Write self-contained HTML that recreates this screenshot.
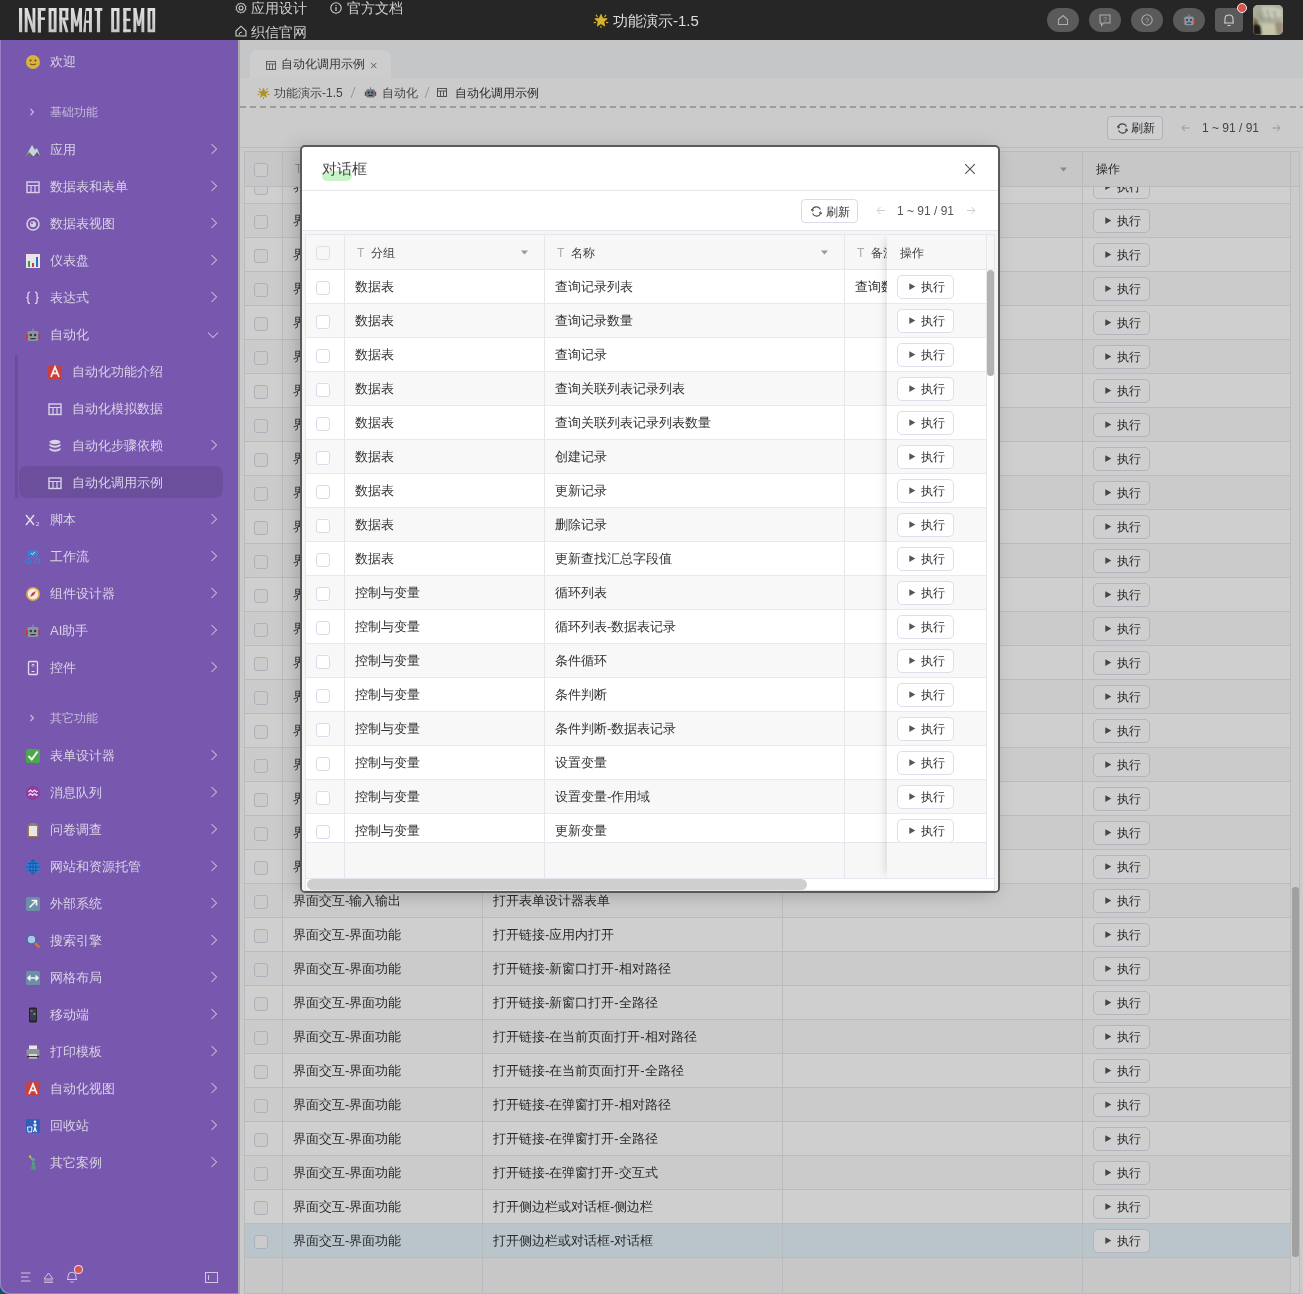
<!DOCTYPE html>
<html><head><meta charset="utf-8"><style>
*{box-sizing:border-box}
html,body{margin:0;padding:0}
body{-webkit-font-smoothing:antialiased;width:1303px;height:1294px;overflow:hidden;position:relative;font-family:"Liberation Sans",sans-serif;background:#262626}
.abs{position:absolute}
.ic{position:absolute;display:block}
#hdr{will-change:transform;position:absolute;left:0;top:0;width:1303px;height:40px;background:#262626}
.hn{position:absolute;font-size:14px;color:#cfcfcf;line-height:16px;white-space:nowrap}
.pill{position:absolute;top:8px;width:32px;height:24px;border-radius:12px;background:#5a5a5a}
#side{will-change:transform;position:absolute;left:0;top:40px;width:238px;height:1254px;background:#7858ae;overflow:hidden;box-shadow:inset 1px -1px 0 #9880c4;border-bottom-left-radius:9px}
#side .ic{}
.sbt{position:absolute;font-size:13px;line-height:20px;color:#d9d3e5;white-space:nowrap}
.sbg{position:absolute;font-size:12px;line-height:16px;color:#c6bbdc;white-space:nowrap}
.sel{position:absolute;background:#6b4f9d;border-radius:8px}
#main{z-index:0;isolation:isolate;will-change:transform;position:absolute;left:238px;top:40px;width:1065px;height:1254px;background:#fafafa;border-left:2px solid #d2d2d6;overflow:hidden}
.tab{position:absolute;left:10px;top:10px;width:141px;height:28px;background:#fdfdfd;border-radius:7px 7px 0 0}
.crumb{position:absolute;left:0;top:38px;width:1065px;height:30px;background:#fbfbfb}
.dash{position:absolute;left:0;top:66px;width:1065px;height:2px;background:repeating-linear-gradient(90deg,#c0c0c4 0 6px,transparent 6px 10px)}
.ctxt{position:absolute;font-size:12px;line-height:14px;color:#555;white-space:nowrap}
.btn{position:absolute;height:23px;border:1px solid #d9dbe6;border-radius:4px;background:#fff;font-size:13px;color:#333;line-height:21px;white-space:nowrap}
.pg{position:absolute;font-size:12px;color:#555;line-height:14px;white-space:nowrap}
#btab{position:absolute;left:4px;top:111px;width:1056px;height:1143px;border:1px solid #e6e7ec;background:#fff;overflow:hidden}
.bhead{position:absolute;left:0;top:0;width:1055px;height:35px;background:#f5f5f7;border-bottom:1px solid #e6e7ec;z-index:2}
.bbody{position:absolute;left:0;top:35px;width:1046px;height:1108px;overflow:hidden;background:#f5f5f7}
.brow{position:absolute;left:0;width:1046px;height:34px;border-bottom:1px solid #e6e7ec;background:#fff}
.brow.odd{background:#fafafa}
.brow.sel2{background:#e5f2fa}
.vl{position:absolute;top:0;width:1px;background:#e6e7ec}
.btxt{position:absolute;top:9px;font-size:13px;line-height:16px;color:#333;white-space:nowrap}
.cb{position:absolute;width:14px;height:14px;border:1px solid #d9dbe8;border-radius:3px;background:#fff}
.cbh{position:absolute;width:14px;height:14px;border:1px solid #dcdeea;border-radius:3px;background:#f7f7f8}
.cbb{position:absolute;width:14px;height:14px;border:1px solid #d6d8e6;border-radius:3px;background:#fafafa}
.eb,.ebb{position:absolute;width:56.5px;height:23.5px;border:1px solid #dcdfea;border-radius:5px;background:#fff;font-size:12px;color:#333}
.eb span,.ebb span{position:absolute;left:23px;top:3.5px;line-height:14px}
#mask{z-index:4;position:absolute;left:238px;top:40px;width:1065px;height:1254px;background:rgba(0,0,0,0.19)}
#dlg{z-index:5;will-change:transform;position:absolute;left:300px;top:145px;width:700px;height:748px;background:#fff;border:2px solid #5a5a5a;border-radius:5px;box-shadow:-8px 0 18px rgba(0,0,0,0.12),0 6px 16px rgba(0,0,0,0.08);overflow:hidden}
.dtxt{position:absolute;top:9px;font-size:13px;line-height:16px;color:#333;white-space:nowrap}
.drow{position:absolute;left:0;width:689px;height:34px;border-bottom:1px solid #e8e9ee;background:#fff}
.drow.odd{background:#f8f8f9}
</style></head><body>
<div id="hdr">
 <svg class="abs" style="left:0;top:0" width="170" height="40" viewBox="0 0 170 40"><defs><linearGradient id="lgx" x1="0" y1="0" x2="0" y2="1"><stop offset="0" stop-color="#e2e2e2"/><stop offset="1" stop-color="#c4c4c4"/></linearGradient></defs><g fill="url(#lgx)" fill-rule="evenodd"><rect x="19.00" y="8.00" width="3.20" height="24.20"/><rect x="24.70" y="8.00" width="2.90" height="24.20"/><rect x="32.50" y="8.00" width="2.90" height="24.20"/><path d="M24.7 8.0 H27.599999999999998 L35.4 32.2 H32.5Z"/><rect x="37.80" y="8.00" width="3.20" height="24.60"/><rect x="37.80" y="8.00" width="7.80" height="2.90"/><rect x="37.80" y="17.40" width="7.20" height="2.60"/><path d="M48.6 8.0 H56.6 V32.2 H48.6Z M51.50 10.90 V29.30 H53.70 V10.90Z"/><rect x="59.30" y="8.00" width="2.90" height="24.20"/><rect x="59.30" y="8.00" width="9.00" height="2.90"/><rect x="65.40" y="8.00" width="2.90" height="12.00"/><rect x="59.30" y="17.60" width="9.00" height="2.70"/><path d="M62.20 20.3 H65.10 L68.5 32.2 H65.60Z"/><rect x="70.90" y="8.00" width="2.90" height="24.20"/><rect x="79.10" y="8.00" width="2.90" height="24.20"/><path d="M70.9 8.0 H73.80 L76.45 21.5 L79.10 8.0 H82 L77.6 26.5 H75.3Z"/><path d="M83.2 32.2 L85.6 8.0 H91.9 V32.2 H89.00 V23.1 H86.00 L85.90 32.2Z M86.30 10.90 H89.00 V20.6 H85.90Z"/><rect x="94.50" y="8.00" width="7.80" height="2.90"/><rect x="96.90" y="8.00" width="3.20" height="24.20"/><path d="M111.2 8.0 H119.5 V32.2 H111.2Z M114.10 10.90 V29.30 H116.60 V10.90Z"/><rect x="123.30" y="8.00" width="3.20" height="24.20"/><rect x="123.30" y="8.00" width="7.50" height="2.90"/><rect x="123.30" y="18.70" width="7.00" height="2.40"/><rect x="123.30" y="29.30" width="7.50" height="2.90"/><rect x="133.40" y="8.00" width="2.90" height="24.20"/><rect x="141.40" y="8.00" width="2.90" height="24.20"/><path d="M133.4 8.0 H136.30 L138.85 21.5 L141.40 8.0 H144.3 L140 26 H137.7Z"/><path d="M147.5 8.0 H155.2 V32.2 H147.5Z M150.40 10.90 V29.30 H152.30 V10.90Z"/></g></svg>
 <svg class="ic" style="left:235px;top:2px" width="12" height="12" viewBox="0 0 12 12"><circle cx="6" cy="6" r="2" fill="none" stroke="#cfcfcf" stroke-width="1.1"/><path d="M6 0.8 L7.2 2 L9 1.8 L9.3 3.5 L11 4.3 L10.4 6 L11 7.7 L9.3 8.5 L9 10.2 L7.2 10 L6 11.2 L4.8 10 L3 10.2 L2.7 8.5 L1 7.7 L1.6 6 L1 4.3 L2.7 3.5 L3 1.8 L4.8 2Z" fill="none" stroke="#cfcfcf" stroke-width="1"/></svg>
 <div class="hn" style="left:251px;top:0px">应用设计</div>
 <svg class="ic" style="left:330px;top:2px" width="12" height="12" viewBox="0 0 12 12"><circle cx="6" cy="6" r="5.2" fill="none" stroke="#cfcfcf" stroke-width="1.1"/><path d="M6 5 V9 M6 3 V4" stroke="#cfcfcf" stroke-width="1.2"/></svg>
 <div class="hn" style="left:347px;top:0px">官方文档</div>
 <svg class="ic" style="left:235px;top:25px" width="12" height="12" viewBox="0 0 12 12"><path d="M1 6 L6 1.2 L11 6 V11 H1Z" fill="none" stroke="#cfcfcf" stroke-width="1.1"/><path d="M4 10 Q4 7 7 7" stroke="#cfcfcf" stroke-width="1" fill="none"/></svg>
 <div class="hn" style="left:251px;top:24px">织信官网</div>
 <svg class="ic" style="left:593px;top:12px" width="16" height="16" viewBox="0 0 16 16"><path d="M8.00 2.20 L9.76 6.37 L14.28 6.76 L10.85 9.73 L11.88 14.14 L8.00 11.80 L4.12 14.14 L5.15 9.73 L1.72 6.76 L6.24 6.37Z" fill="#d6b42e" stroke="#e2c040" stroke-width="0.6" stroke-linejoin="round"/><path d="M3.2 3.2 L4.2 4.6 M12.8 3.2 L11.8 4.6 M1.2 10.6 L2.6 10.4 M14.8 10.6 L13.4 10.4 M8 15.8 V14.4" stroke="#d9a520" stroke-width="1.2" stroke-linecap="round"/></svg>
 <div class="hn" style="left:613px;top:13px;font-size:15px;color:#dedede">功能演示-1.5</div>
 <div class="pill" style="left:1047px"></div>
 <div class="pill" style="left:1089px"></div>
 <div class="pill" style="left:1131px"></div>
 <div class="pill" style="left:1173px"></div>
 <div class="abs" style="left:1215px;top:8px;width:28px;height:24px;border-radius:4px;background:#5a5a5a"></div>
 <svg class="ic" style="left:1057px;top:14px" width="12" height="12" viewBox="0 0 12 12"><path d="M1.5 5.5 L6 1.5 L10.5 5.5 V10.5 H1.5Z" fill="none" stroke="#adadad" stroke-width="1.05"/></svg>
 <svg class="ic" style="left:1099px;top:14px" width="12" height="13" viewBox="0 0 12 13"><path d="M1 1 H11 V9 H4.5 L2.5 11.5 V9 H1Z" fill="none" stroke="#adadad" stroke-width="1.05"/><text x="6" y="7.5" text-anchor="middle" font-size="6.5" font-family="Liberation Sans" fill="#adadad">?</text></svg>
 <svg class="ic" style="left:1141px;top:14px" width="12" height="12" viewBox="0 0 12 12"><circle cx="6" cy="6" r="5.2" fill="none" stroke="#adadad" stroke-width="1.05"/><text x="6" y="8.8" text-anchor="middle" font-size="8" font-family="Liberation Sans" fill="#adadad">?</text></svg>
 <svg class="ic" style="left:1182px;top:13px" width="14" height="14" viewBox="0 0 16 16"><rect x="2.5" y="4" width="11" height="10" rx="2" fill="#8a96a3"/><rect x="1" y="7" width="1.6" height="5" fill="#c0392b"/><rect x="13.4" y="7" width="1.6" height="5" fill="#c0392b"/><rect x="7.4" y="1.5" width="1.2" height="2.5" fill="#8a96a3"/><circle cx="5.8" cy="8" r="1.2" fill="#2a3440"/><circle cx="10.2" cy="8" r="1.2" fill="#2a3440"/><rect x="5.5" y="11" width="5" height="1.2" fill="#2a3440"/></svg>
 <svg class="ic" style="left:1223px;top:13px" width="12" height="14" viewBox="0 0 12 14"><path d="M2 10 V6 Q2 2 6 2 Q10 2 10 6 V10 H11 H1Z" fill="none" stroke="#d0d0d0" stroke-width="1.1"/><path d="M4.5 12.5 H7.5" stroke="#d0d0d0" stroke-width="1.1"/></svg>
 <div class="abs" style="left:1237px;top:3px;width:10px;height:10px;border-radius:50%;background:#d9534f;border:1.5px solid #eee"></div>
 <svg class="abs" style="left:1253px;top:5px" width="30" height="30" viewBox="0 0 30 30"><defs><clipPath id="avc"><rect width="30" height="30" rx="5"/></clipPath><filter id="avb"><feGaussianBlur stdDeviation="1.2"/></filter></defs><g clip-path="url(#avc)"><rect width="30" height="30" fill="#b9b9a2"/><g filter="url(#avb)"><path d="M0 0 H30 V14 Q22 20 14 17 Q6 19 0 16Z" fill="#a9aa98"/><path d="M8 2 Q18 0 29 4 V12 Q20 15 12 12Z" fill="#c6c8b8"/><path d="M0 17 Q5 18 8 22 L9 30 H0Z" fill="#1c1a12"/><path d="M0 12 Q4 14 6 17 L0 20Z" fill="#7d6c4e"/><path d="M22 18 Q28 16 30 18 V30 H24 Q22 24 22 18Z" fill="#9c8f7c"/><path d="M9 20 Q16 18 22 20 L23 30 H9Z" fill="#c8c6a8"/><path d="M5 8 L10 16 M14 5 L17 15 M21 6 L23 14" stroke="#7c7e68" stroke-width="0.9"/></g></g></svg>
</div>
<div class="abs" style="left:0;top:1280px;width:14px;height:14px;background:linear-gradient(45deg,#005a58 40%,#101414 70%)"></div>
<div id="side">
<div class="sel" style="left:19px;top:425.5px;width:204px;height:32px"></div>
<svg class="ic" style="left:25px;top:14px" width="16" height="16" viewBox="0 0 16 16"><circle cx="8" cy="8" r="7" fill="#d8b23c"/><circle cx="5.6" cy="6.5" r="0.9" fill="#5a4320"/><circle cx="10.4" cy="6.5" r="0.9" fill="#5a4320"/><path d="M5 10 Q8 11.5 11 10" stroke="#5a4320" stroke-width="0.9" fill="none"/></svg>
<div class="sbt" style="left:50px;top:12px">欢迎</div>
<svg class="ic" style="left:29px;top:68px" width="6" height="8" viewBox="0 0 6 8"><path d="M1.5 1 L4.5 4 L1.5 7" stroke="#cbbfe0" stroke-width="1.1" fill="none"/></svg>
<div class="sbg" style="left:50px;top:64px">基础功能</div>
<svg class="ic" style="left:25px;top:102px" width="16" height="16" viewBox="0 0 16 16"><path d="M1 14 L7 3 L10 8 L12 6 L15 14 Z" fill="#c9d3de"/><path d="M1 14 L4 10 L8 14 Z" fill="#5d7a55"/><path d="M9 14 L12 10 L15 14Z" fill="#4f6b4a"/></svg>
<div class="sbt" style="left:50px;top:100px">应用</div>
<svg class="ic" style="left:210px;top:103px" width="8" height="12" viewBox="0 0 8 12"><path d="M1.5 1 L6.5 6 L1.5 11" stroke="#c8bedb" stroke-width="1.05" fill="none"/></svg>
<svg class="ic" style="left:25px;top:139px" width="16" height="16" viewBox="0 0 16 16"><rect x="2" y="3" width="12" height="10.5" fill="none" stroke="#d8d2e4" stroke-width="1.4"/><path d="M2 6.5 H14 M6 6.5 V13.5 M10 6.5 V13.5" stroke="#d8d2e4" stroke-width="1.2"/></svg>
<div class="sbt" style="left:50px;top:137px">数据表和表单</div>
<svg class="ic" style="left:210px;top:140px" width="8" height="12" viewBox="0 0 8 12"><path d="M1.5 1 L6.5 6 L1.5 11" stroke="#c8bedb" stroke-width="1.05" fill="none"/></svg>
<svg class="ic" style="left:25px;top:176px" width="16" height="16" viewBox="0 0 16 16"><circle cx="8" cy="8" r="6" fill="none" stroke="#d8d2e4" stroke-width="1.5"/><circle cx="8" cy="8.3" r="3" fill="#d8d2e4"/><circle cx="7" cy="7.3" r="1" fill="#7858ae"/></svg>
<div class="sbt" style="left:50px;top:174px">数据表视图</div>
<svg class="ic" style="left:210px;top:177px" width="8" height="12" viewBox="0 0 8 12"><path d="M1.5 1 L6.5 6 L1.5 11" stroke="#c8bedb" stroke-width="1.05" fill="none"/></svg>
<svg class="ic" style="left:25px;top:213px" width="16" height="16" viewBox="0 0 16 16"><rect x="1" y="1" width="14" height="14" fill="#e6e6ea"/><rect x="3" y="8" width="2" height="6" fill="#3a9a4a"/><rect x="7" y="10" width="2" height="4" fill="#d03a3a"/><rect x="11" y="4" width="2" height="10" fill="#2a6fc0"/></svg>
<div class="sbt" style="left:50px;top:211px">仪表盘</div>
<svg class="ic" style="left:210px;top:214px" width="8" height="12" viewBox="0 0 8 12"><path d="M1.5 1 L6.5 6 L1.5 11" stroke="#c8bedb" stroke-width="1.05" fill="none"/></svg>
<svg class="ic" style="left:25px;top:250px" width="16" height="16" viewBox="0 0 16 16"><path d="M5 2.2 Q3 2.2 3 4.2 V6.5 Q3 7.7 1.3 7.7 Q3 7.7 3 9 V11.4 Q3 13.3 5 13.3 M10 2.2 Q12 2.2 12 4.2 V6.5 Q12 7.7 13.7 7.7 Q12 7.7 12 9 V11.4 Q12 13.3 10 13.3" fill="none" stroke="#dcd6e6" stroke-width="1.3"/></svg>
<div class="sbt" style="left:50px;top:248px">表达式</div>
<svg class="ic" style="left:210px;top:251px" width="8" height="12" viewBox="0 0 8 12"><path d="M1.5 1 L6.5 6 L1.5 11" stroke="#c8bedb" stroke-width="1.05" fill="none"/></svg>
<svg class="ic" style="left:25px;top:287px" width="16" height="16" viewBox="0 0 16 16"><rect x="2.5" y="4" width="11" height="10" rx="2" fill="#8a96a3"/><rect x="1" y="7" width="1.6" height="5" fill="#c0392b"/><rect x="13.4" y="7" width="1.6" height="5" fill="#c0392b"/><rect x="7.4" y="1.5" width="1.2" height="2.5" fill="#8a96a3"/><circle cx="5.8" cy="8" r="1.2" fill="#2a3440"/><circle cx="10.2" cy="8" r="1.2" fill="#2a3440"/><rect x="5.5" y="11" width="5" height="1.2" fill="#2a3440"/></svg>
<div class="sbt" style="left:50px;top:285px">自动化</div>
<svg class="ic" style="left:207px;top:291px" width="12" height="8" viewBox="0 0 12 8"><path d="M1 1.5 L6 6.5 L11 1.5" stroke="#c8bedb" stroke-width="1.05" fill="none"/></svg>
<svg class="ic" style="left:47px;top:324px" width="16" height="16" viewBox="0 0 16 16"><rect x="1" y="1" width="14" height="14" rx="1.5" fill="#c94040"/><path d="M4 13 L8 3 L12 13 M5.6 9.3 H10.4" stroke="#f4f4f4" stroke-width="1.7" fill="none"/></svg>
<div class="sbt" style="left:72px;top:322px">自动化功能介绍</div>
<svg class="ic" style="left:47px;top:361px" width="16" height="16" viewBox="0 0 16 16"><rect x="2" y="3" width="12" height="10.5" fill="none" stroke="#d8d2e4" stroke-width="1.4"/><path d="M2 6.5 H14 M6 6.5 V13.5 M10 6.5 V13.5" stroke="#d8d2e4" stroke-width="1.2"/></svg>
<div class="sbt" style="left:72px;top:359px">自动化模拟数据</div>
<svg class="ic" style="left:47px;top:398px" width="16" height="16" viewBox="0 0 16 16"><ellipse cx="8" cy="4" rx="5.5" ry="2.2" fill="#d8d2e4"/><path d="M2.5 6 Q8 9.5 13.5 6 V8 Q8 11.5 2.5 8Z" fill="#d8d2e4"/><path d="M2.5 10 Q8 13.5 13.5 10 V12 Q8 15.5 2.5 12Z" fill="#d8d2e4"/></svg>
<div class="sbt" style="left:72px;top:396px">自动化步骤依赖</div>
<svg class="ic" style="left:210px;top:399px" width="8" height="12" viewBox="0 0 8 12"><path d="M1.5 1 L6.5 6 L1.5 11" stroke="#c8bedb" stroke-width="1.05" fill="none"/></svg>
<svg class="ic" style="left:47px;top:435px" width="16" height="16" viewBox="0 0 16 16"><rect x="2" y="3" width="12" height="10.5" fill="none" stroke="#d8d2e4" stroke-width="1.4"/><path d="M2 6.5 H14 M6 6.5 V13.5 M10 6.5 V13.5" stroke="#d8d2e4" stroke-width="1.2"/></svg>
<div class="sbt" style="left:72px;top:433px">自动化调用示例</div>
<svg class="ic" style="left:25px;top:472px" width="16" height="16" viewBox="0 0 16 16"><path d="M1 3 L9 13 M9 3 L1 13" stroke="#e4e0ec" stroke-width="1.4"/><text x="11" y="14" font-size="6" font-family="Liberation Sans" fill="#e4e0ec">2</text></svg>
<div class="sbt" style="left:50px;top:470px">脚本</div>
<svg class="ic" style="left:210px;top:473px" width="8" height="12" viewBox="0 0 8 12"><path d="M1.5 1 L6.5 6 L1.5 11" stroke="#c8bedb" stroke-width="1.05" fill="none"/></svg>
<svg class="ic" style="left:25px;top:509px" width="16" height="16" viewBox="0 0 16 16"><rect x="3" y="1.5" width="10" height="5.5" rx="0.8" fill="#2f86d6"/><path d="M6 4.2 L7.5 5.5 L10 2.8" stroke="#e8f0ff" stroke-width="0.9" fill="none"/><path d="M8 7 V8.5 M3.5 8.5 H12.5 M3.5 8.5 V10 M12.5 8.5 V10" stroke="#2f86d6" stroke-width="1.1" fill="none"/><circle cx="3.5" cy="12.2" r="2.3" fill="none" stroke="#2f86d6" stroke-width="1.2"/><circle cx="12.5" cy="12.2" r="2.3" fill="none" stroke="#2f86d6" stroke-width="1.2"/></svg>
<div class="sbt" style="left:50px;top:507px">工作流</div>
<svg class="ic" style="left:210px;top:510px" width="8" height="12" viewBox="0 0 8 12"><path d="M1.5 1 L6.5 6 L1.5 11" stroke="#c8bedb" stroke-width="1.05" fill="none"/></svg>
<svg class="ic" style="left:25px;top:546px" width="16" height="16" viewBox="0 0 16 16"><circle cx="8" cy="8" r="7" fill="#d9a441"/><circle cx="8" cy="8" r="5.4" fill="#f0ece4"/><path d="M11 5 L9 9 L5 11 L7 7Z" fill="#c43b3b"/></svg>
<div class="sbt" style="left:50px;top:544px">组件设计器</div>
<svg class="ic" style="left:210px;top:547px" width="8" height="12" viewBox="0 0 8 12"><path d="M1.5 1 L6.5 6 L1.5 11" stroke="#c8bedb" stroke-width="1.05" fill="none"/></svg>
<svg class="ic" style="left:25px;top:583px" width="16" height="16" viewBox="0 0 16 16"><rect x="2.5" y="4" width="11" height="10" rx="2" fill="#8a96a3"/><rect x="1" y="7" width="1.6" height="5" fill="#c0392b"/><rect x="13.4" y="7" width="1.6" height="5" fill="#c0392b"/><rect x="7.4" y="1.5" width="1.2" height="2.5" fill="#8a96a3"/><circle cx="5.8" cy="8" r="1.2" fill="#2a3440"/><circle cx="10.2" cy="8" r="1.2" fill="#2a3440"/><rect x="5.5" y="11" width="5" height="1.2" fill="#2a3440"/></svg>
<div class="sbt" style="left:50px;top:581px">AI助手</div>
<svg class="ic" style="left:210px;top:584px" width="8" height="12" viewBox="0 0 8 12"><path d="M1.5 1 L6.5 6 L1.5 11" stroke="#c8bedb" stroke-width="1.05" fill="none"/></svg>
<svg class="ic" style="left:25px;top:620px" width="16" height="16" viewBox="0 0 16 16"><rect x="3.5" y="1.5" width="9" height="13" rx="1" fill="none" stroke="#e0dbe8" stroke-width="1.3"/><path d="M8 4 V7 M6.5 5.5 L8 4 L9.5 5.5" stroke="#e0dbe8" stroke-width="1"/><rect x="6.5" y="11" width="3" height="1" fill="#e0dbe8"/></svg>
<div class="sbt" style="left:50px;top:618px">控件</div>
<svg class="ic" style="left:210px;top:621px" width="8" height="12" viewBox="0 0 8 12"><path d="M1.5 1 L6.5 6 L1.5 11" stroke="#c8bedb" stroke-width="1.05" fill="none"/></svg>
<svg class="ic" style="left:29px;top:674px" width="6" height="8" viewBox="0 0 6 8"><path d="M1.5 1 L4.5 4 L1.5 7" stroke="#cbbfe0" stroke-width="1.1" fill="none"/></svg>
<div class="sbg" style="left:50px;top:670px">其它功能</div>
<svg class="ic" style="left:25px;top:708px" width="16" height="16" viewBox="0 0 16 16"><rect x="1" y="1" width="14" height="14" rx="2" fill="#4aa84a"/><path d="M3.5 8 L6.8 11.5 L12.5 3.5" stroke="#f4f4f4" stroke-width="2" fill="none"/></svg>
<div class="sbt" style="left:50px;top:706px">表单设计器</div>
<svg class="ic" style="left:210px;top:709px" width="8" height="12" viewBox="0 0 8 12"><path d="M1.5 1 L6.5 6 L1.5 11" stroke="#c8bedb" stroke-width="1.05" fill="none"/></svg>
<svg class="ic" style="left:25px;top:745px" width="16" height="16" viewBox="0 0 16 16"><circle cx="8" cy="8" r="7" fill="#8e3b9e"/><path d="M3.5 7 L5.5 5 L7.5 7 L9.5 5 L11.5 7 L12.5 6 M3.5 10.5 L5.5 8.5 L7.5 10.5 L9.5 8.5 L11.5 10.5 L12.5 9.5" stroke="#f0e0f4" stroke-width="1.2" fill="none"/></svg>
<div class="sbt" style="left:50px;top:743px">消息队列</div>
<svg class="ic" style="left:210px;top:746px" width="8" height="12" viewBox="0 0 8 12"><path d="M1.5 1 L6.5 6 L1.5 11" stroke="#c8bedb" stroke-width="1.05" fill="none"/></svg>
<svg class="ic" style="left:25px;top:782px" width="16" height="16" viewBox="0 0 16 16"><rect x="2.5" y="2.5" width="11" height="12.5" rx="1" fill="#a07850"/><rect x="4" y="4" width="8" height="10" fill="#e8e8e8"/><rect x="5.5" y="1" width="5" height="3" rx="0.6" fill="#888"/></svg>
<div class="sbt" style="left:50px;top:780px">问卷调查</div>
<svg class="ic" style="left:210px;top:783px" width="8" height="12" viewBox="0 0 8 12"><path d="M1.5 1 L6.5 6 L1.5 11" stroke="#c8bedb" stroke-width="1.05" fill="none"/></svg>
<svg class="ic" style="left:25px;top:819px" width="16" height="16" viewBox="0 0 16 16"><circle cx="8" cy="8" r="7" fill="#2a7fd4"/><path d="M1 8 H15 M8 1 V15 M2.5 4.5 H13.5 M2.5 11.5 H13.5" stroke="#1a4f9a" stroke-width="0.8"/><ellipse cx="8" cy="8" rx="3" ry="7" fill="none" stroke="#1a4f9a" stroke-width="0.8"/></svg>
<div class="sbt" style="left:50px;top:817px">网站和资源托管</div>
<svg class="ic" style="left:210px;top:820px" width="8" height="12" viewBox="0 0 8 12"><path d="M1.5 1 L6.5 6 L1.5 11" stroke="#c8bedb" stroke-width="1.05" fill="none"/></svg>
<svg class="ic" style="left:25px;top:856px" width="16" height="16" viewBox="0 0 16 16"><rect x="1" y="1" width="14" height="14" rx="1.5" fill="#6c8ea6"/><path d="M4.5 11.5 L11 5 M6.5 4.5 H11.5 V9.5" stroke="#f4f4f4" stroke-width="1.6" fill="none"/></svg>
<div class="sbt" style="left:50px;top:854px">外部系统</div>
<svg class="ic" style="left:210px;top:857px" width="8" height="12" viewBox="0 0 8 12"><path d="M1.5 1 L6.5 6 L1.5 11" stroke="#c8bedb" stroke-width="1.05" fill="none"/></svg>
<svg class="ic" style="left:25px;top:893px" width="16" height="16" viewBox="0 0 16 16"><circle cx="6.5" cy="6.5" r="4.5" fill="#a9c9e6" stroke="#3a6fa0" stroke-width="1.4"/><path d="M9.8 9.8 L14.5 14.5" stroke="#d77a1e" stroke-width="2.4"/></svg>
<div class="sbt" style="left:50px;top:891px">搜索引擎</div>
<svg class="ic" style="left:210px;top:894px" width="8" height="12" viewBox="0 0 8 12"><path d="M1.5 1 L6.5 6 L1.5 11" stroke="#c8bedb" stroke-width="1.05" fill="none"/></svg>
<svg class="ic" style="left:25px;top:930px" width="16" height="16" viewBox="0 0 16 16"><rect x="1" y="1" width="14" height="14" rx="1.5" fill="#6c8ea6"/><path d="M3 8 H13 M5.5 5.5 L3 8 L5.5 10.5 M10.5 5.5 L13 8 L10.5 10.5" stroke="#f4f4f4" stroke-width="1.5" fill="none"/></svg>
<div class="sbt" style="left:50px;top:928px">网格布局</div>
<svg class="ic" style="left:210px;top:931px" width="8" height="12" viewBox="0 0 8 12"><path d="M1.5 1 L6.5 6 L1.5 11" stroke="#c8bedb" stroke-width="1.05" fill="none"/></svg>
<svg class="ic" style="left:25px;top:967px" width="16" height="16" viewBox="0 0 16 16"><rect x="4" y="0.5" width="8" height="15" rx="1.5" fill="#222"/><rect x="5" y="2" width="6" height="11.5" fill="#3a3a5a"/><rect x="5.5" y="3" width="2" height="2" fill="#d04a4a"/><rect x="8.5" y="6" width="2" height="2" fill="#4ab04a"/></svg>
<div class="sbt" style="left:50px;top:965px">移动端</div>
<svg class="ic" style="left:210px;top:968px" width="8" height="12" viewBox="0 0 8 12"><path d="M1.5 1 L6.5 6 L1.5 11" stroke="#c8bedb" stroke-width="1.05" fill="none"/></svg>
<svg class="ic" style="left:25px;top:1004px" width="16" height="16" viewBox="0 0 16 16"><rect x="4" y="1.5" width="8" height="4" fill="#e8e8e8"/><rect x="1.5" y="5" width="13" height="7" rx="1.5" fill="#8c949c"/><rect x="4" y="10" width="8" height="4.5" fill="#d8d8d8"/><rect x="2" y="12" width="12" height="1.2" fill="#333"/></svg>
<div class="sbt" style="left:50px;top:1002px">打印模板</div>
<svg class="ic" style="left:210px;top:1005px" width="8" height="12" viewBox="0 0 8 12"><path d="M1.5 1 L6.5 6 L1.5 11" stroke="#c8bedb" stroke-width="1.05" fill="none"/></svg>
<svg class="ic" style="left:25px;top:1041px" width="16" height="16" viewBox="0 0 16 16"><rect x="1" y="1" width="14" height="14" rx="1.5" fill="#c94040"/><path d="M4 13 L8 3 L12 13 M5.6 9.3 H10.4" stroke="#f4f4f4" stroke-width="1.7" fill="none"/></svg>
<div class="sbt" style="left:50px;top:1039px">自动化视图</div>
<svg class="ic" style="left:210px;top:1042px" width="8" height="12" viewBox="0 0 8 12"><path d="M1.5 1 L6.5 6 L1.5 11" stroke="#c8bedb" stroke-width="1.05" fill="none"/></svg>
<svg class="ic" style="left:25px;top:1078px" width="16" height="16" viewBox="0 0 16 16"><rect x="1" y="1" width="14" height="14" rx="1.5" fill="#2f5fb6"/><circle cx="10" cy="3.8" r="1.2" fill="#fff"/><path d="M10 5.5 V10 M10 10 L8.5 14 M10 10 L11.5 14 M8 7 L12 7" stroke="#fff" stroke-width="1.2"/><path d="M2.5 9 H7 L6.5 14 H3Z" fill="none" stroke="#fff" stroke-width="0.9"/></svg>
<div class="sbt" style="left:50px;top:1076px">回收站</div>
<svg class="ic" style="left:210px;top:1079px" width="8" height="12" viewBox="0 0 8 12"><path d="M1.5 1 L6.5 6 L1.5 11" stroke="#c8bedb" stroke-width="1.05" fill="none"/></svg>
<svg class="ic" style="left:25px;top:1115px" width="16" height="16" viewBox="0 0 16 16"><path d="M6 14.5 H11 L10 9 H7Z" fill="#4f9a7a"/><path d="M7 9 L8 5 L9.5 9Z" fill="#5aa886"/><path d="M7.5 5 L5 1.5" stroke="#6ab896" stroke-width="1.3"/><circle cx="5" cy="1.5" r="1.2" fill="#e0b030"/><circle cx="8.6" cy="4.5" r="1.5" fill="#5aa886"/></svg>
<div class="sbt" style="left:50px;top:1113px">其它案例</div>
<svg class="ic" style="left:210px;top:1116px" width="8" height="12" viewBox="0 0 8 12"><path d="M1.5 1 L6.5 6 L1.5 11" stroke="#c8bedb" stroke-width="1.05" fill="none"/></svg>
<div class="abs" style="left:15px;top:315px;width:3px;height:143px;background:#6a4e9c"></div>
<svg class="ic" style="left:20px;top:1232px" width="12" height="10" viewBox="0 0 12 10"><path d="M1 1 H10.5 M1 5 H8.5 M1 9 H10.5" stroke="#cfc7df" stroke-width="1"/></svg>
<svg class="ic" style="left:43px;top:1232px" width="12" height="11" viewBox="0 0 12 11"><path d="M5.5 1 L10 7 H1Z" stroke="#cfc7df" stroke-width="1" fill="none"/><path d="M1 9 H10 M1 10.5 H10" stroke="#cfc7df" stroke-width="0.8"/></svg>
<svg class="ic" style="left:66px;top:1230px" width="12" height="13" viewBox="0 0 12 13"><path d="M2 9.5 V6 Q2 2.2 6 2.2 Q10 2.2 10 6 V9.5 H11 H1Z" fill="none" stroke="#cfc7df" stroke-width="1"/><path d="M4.5 12 H7.5" stroke="#cfc7df" stroke-width="1"/></svg>
<div class="abs" style="left:74.5px;top:1225.5px;width:7px;height:7px;border-radius:50%;background:#d9534f;box-shadow:0 0 0 1px #e8e0f0"></div>
<svg class="ic" style="left:204.5px;top:1232px" width="13" height="11" viewBox="0 0 13 11"><rect x="0.5" y="0.5" width="12" height="10" fill="none" stroke="#cfc7df" stroke-width="1"/><path d="M3.5 3 V8" stroke="#cfc7df" stroke-width="1"/></svg>
</div>
<div id="main">
 <div class="abs" style="left:0;top:0;width:1065px;height:38px;background:#f3f4f7"></div>
 <div class="tab"></div>
 <div class="crumb"></div>
 <div class="dash"></div>
 <svg class="ic" style="left:26px;top:20.5px" width="10" height="9" viewBox="0 0 10 9"><rect x="0.5" y="0.5" width="9" height="8" fill="none" stroke="#666" stroke-width="0.9"/><path d="M0.5 3 H9.5 M3.5 3 V8.5 M6.5 3 V8.5" stroke="#666" stroke-width="0.9"/></svg>
 <div class="ctxt" style="left:41px;top:17px;color:#444">自动化调用示例</div>
 <svg class="ic" style="left:130px;top:21.5px" width="7.5" height="7" viewBox="0 0 8 8"><path d="M1 1 L7 7 M7 1 L1 7" stroke="#666" stroke-width="1.1"/></svg>
 <svg class="ic" style="left:16.5px;top:46.4px" width="13" height="13" viewBox="0 0 16 16"><path d="M8.00 2.20 L9.76 6.37 L14.28 6.76 L10.85 9.73 L11.88 14.14 L8.00 11.80 L4.12 14.14 L5.15 9.73 L1.72 6.76 L6.24 6.37Z" fill="#d6b42e" stroke="#e2c040" stroke-width="0.6" stroke-linejoin="round"/><path d="M3.2 3.2 L4.2 4.6 M12.8 3.2 L11.8 4.6 M1.2 10.6 L2.6 10.4 M14.8 10.6 L13.4 10.4 M8 15.8 V14.4" stroke="#d9a520" stroke-width="1.2" stroke-linecap="round"/></svg>
 <div class="ctxt" style="left:34px;top:46px">功能演示-1.5</div>
 <svg class="ic" style="left:109.5px;top:46px" width="6" height="13" viewBox="0 0 6 13"><path d="M5 1 L1 12" stroke="#b8b8c0" stroke-width="1"/></svg>
 <svg class="ic" style="left:123.5px;top:46px" width="13" height="13" viewBox="0 0 16 16"><rect x="2.5" y="4" width="11" height="10" rx="2" fill="#8a96a3"/><rect x="1" y="7" width="1.6" height="5" fill="#c0392b"/><rect x="13.4" y="7" width="1.6" height="5" fill="#c0392b"/><rect x="7.4" y="1.5" width="1.2" height="2.5" fill="#8a96a3"/><circle cx="5.8" cy="8" r="1.2" fill="#2a3440"/><circle cx="10.2" cy="8" r="1.2" fill="#2a3440"/><rect x="5.5" y="11" width="5" height="1.2" fill="#2a3440"/></svg>
 <div class="ctxt" style="left:142px;top:46px">自动化</div>
 <svg class="ic" style="left:183.5px;top:46px" width="6" height="13" viewBox="0 0 6 13"><path d="M5 1 L1 12" stroke="#b8b8c0" stroke-width="1"/></svg>
 <svg class="ic" style="left:197px;top:48px" width="10" height="9" viewBox="0 0 10 9"><rect x="0.5" y="0.5" width="9" height="8" fill="none" stroke="#666" stroke-width="1"/><path d="M0.5 3 H9.5 M3.5 3 V8.5 M6.5 3 V8.5" stroke="#666" stroke-width="1"/></svg>
 <div class="ctxt" style="left:214.5px;top:46px;color:#333;font-weight:500">自动化调用示例</div>
 <div class="abs" style="left:0;top:107px;width:1065px;height:1px;background:#e8e8ec"></div>
 <div class="btn" style="left:866.5px;top:76px;width:56px;height:23.5px"><svg width="11" height="11" viewBox="0 0 11 11" style="position:absolute;left:9px;top:5.8px"><path d="M1.2 4.3 A4.3 4.3 0 0 1 9.4 3.6" fill="none" stroke="#555" stroke-width="1.1"/><path d="M9.8 6.7 A4.3 4.3 0 0 1 1.6 7.4" fill="none" stroke="#555" stroke-width="1.1"/><path d="M0.4 3 L1.3 5.2 L3 3.9" fill="none" stroke="#555" stroke-width="1"/><path d="M10.6 8 L9.7 5.8 L8 7.1" fill="none" stroke="#555" stroke-width="1"/></svg><span style="position:absolute;left:23.5px;top:4px;line-height:14px;font-size:12px">刷新</span></div>
 <svg class="ic" style="left:941px;top:84px" width="9" height="8" viewBox="0 0 9 8"><path d="M8.5 4 H1 M4 0.8 L0.8 4 L4 7.2" stroke="#b8b8b8" stroke-width="1" fill="none"/></svg>
 <div class="pg" style="left:962px;top:81px">1 ~ 91 / 91</div>
 <svg class="ic" style="left:1032px;top:84px" width="9" height="8" viewBox="0 0 9 8"><path d="M0.5 4 H8 M5 0.8 L8.2 4 L5 7.2" stroke="#b8b8b8" stroke-width="1" fill="none"/></svg>
 <div id="btab">
  <div class="bbody">
<div class="brow" style="top:-17px"><div class="cbb" style="left:9px;top:11px"></div><div class="btxt" style="left:48px">界面交互-界面功能</div><div class="btxt" style="left:248px"></div><div class="ebb" style="left:848px;top:5px"><svg width="7" height="8" viewBox="0 0 7 8" style="position:absolute;left:11px;top:7.3px"><path d="M0.3 0.2 L6.3 3.6 L0.3 7Z" fill="#555"/></svg><span>执行</span></div></div>
<div class="brow odd" style="top:17px"><div class="cbb" style="left:9px;top:11px"></div><div class="btxt" style="left:48px">界面交互-界面功能</div><div class="btxt" style="left:248px"></div><div class="ebb" style="left:848px;top:5px"><svg width="7" height="8" viewBox="0 0 7 8" style="position:absolute;left:11px;top:7.3px"><path d="M0.3 0.2 L6.3 3.6 L0.3 7Z" fill="#555"/></svg><span>执行</span></div></div>
<div class="brow" style="top:51px"><div class="cbb" style="left:9px;top:11px"></div><div class="btxt" style="left:48px">界面交互-界面功能</div><div class="btxt" style="left:248px"></div><div class="ebb" style="left:848px;top:5px"><svg width="7" height="8" viewBox="0 0 7 8" style="position:absolute;left:11px;top:7.3px"><path d="M0.3 0.2 L6.3 3.6 L0.3 7Z" fill="#555"/></svg><span>执行</span></div></div>
<div class="brow odd" style="top:85px"><div class="cbb" style="left:9px;top:11px"></div><div class="btxt" style="left:48px">界面交互-界面功能</div><div class="btxt" style="left:248px"></div><div class="ebb" style="left:848px;top:5px"><svg width="7" height="8" viewBox="0 0 7 8" style="position:absolute;left:11px;top:7.3px"><path d="M0.3 0.2 L6.3 3.6 L0.3 7Z" fill="#555"/></svg><span>执行</span></div></div>
<div class="brow" style="top:119px"><div class="cbb" style="left:9px;top:11px"></div><div class="btxt" style="left:48px">界面交互-界面功能</div><div class="btxt" style="left:248px"></div><div class="ebb" style="left:848px;top:5px"><svg width="7" height="8" viewBox="0 0 7 8" style="position:absolute;left:11px;top:7.3px"><path d="M0.3 0.2 L6.3 3.6 L0.3 7Z" fill="#555"/></svg><span>执行</span></div></div>
<div class="brow odd" style="top:153px"><div class="cbb" style="left:9px;top:11px"></div><div class="btxt" style="left:48px">界面交互-界面功能</div><div class="btxt" style="left:248px"></div><div class="ebb" style="left:848px;top:5px"><svg width="7" height="8" viewBox="0 0 7 8" style="position:absolute;left:11px;top:7.3px"><path d="M0.3 0.2 L6.3 3.6 L0.3 7Z" fill="#555"/></svg><span>执行</span></div></div>
<div class="brow" style="top:187px"><div class="cbb" style="left:9px;top:11px"></div><div class="btxt" style="left:48px">界面交互-界面功能</div><div class="btxt" style="left:248px"></div><div class="ebb" style="left:848px;top:5px"><svg width="7" height="8" viewBox="0 0 7 8" style="position:absolute;left:11px;top:7.3px"><path d="M0.3 0.2 L6.3 3.6 L0.3 7Z" fill="#555"/></svg><span>执行</span></div></div>
<div class="brow odd" style="top:221px"><div class="cbb" style="left:9px;top:11px"></div><div class="btxt" style="left:48px">界面交互-界面功能</div><div class="btxt" style="left:248px"></div><div class="ebb" style="left:848px;top:5px"><svg width="7" height="8" viewBox="0 0 7 8" style="position:absolute;left:11px;top:7.3px"><path d="M0.3 0.2 L6.3 3.6 L0.3 7Z" fill="#555"/></svg><span>执行</span></div></div>
<div class="brow" style="top:255px"><div class="cbb" style="left:9px;top:11px"></div><div class="btxt" style="left:48px">界面交互-界面功能</div><div class="btxt" style="left:248px"></div><div class="ebb" style="left:848px;top:5px"><svg width="7" height="8" viewBox="0 0 7 8" style="position:absolute;left:11px;top:7.3px"><path d="M0.3 0.2 L6.3 3.6 L0.3 7Z" fill="#555"/></svg><span>执行</span></div></div>
<div class="brow odd" style="top:289px"><div class="cbb" style="left:9px;top:11px"></div><div class="btxt" style="left:48px">界面交互-界面功能</div><div class="btxt" style="left:248px"></div><div class="ebb" style="left:848px;top:5px"><svg width="7" height="8" viewBox="0 0 7 8" style="position:absolute;left:11px;top:7.3px"><path d="M0.3 0.2 L6.3 3.6 L0.3 7Z" fill="#555"/></svg><span>执行</span></div></div>
<div class="brow" style="top:323px"><div class="cbb" style="left:9px;top:11px"></div><div class="btxt" style="left:48px">界面交互-界面功能</div><div class="btxt" style="left:248px"></div><div class="ebb" style="left:848px;top:5px"><svg width="7" height="8" viewBox="0 0 7 8" style="position:absolute;left:11px;top:7.3px"><path d="M0.3 0.2 L6.3 3.6 L0.3 7Z" fill="#555"/></svg><span>执行</span></div></div>
<div class="brow odd" style="top:357px"><div class="cbb" style="left:9px;top:11px"></div><div class="btxt" style="left:48px">界面交互-界面功能</div><div class="btxt" style="left:248px"></div><div class="ebb" style="left:848px;top:5px"><svg width="7" height="8" viewBox="0 0 7 8" style="position:absolute;left:11px;top:7.3px"><path d="M0.3 0.2 L6.3 3.6 L0.3 7Z" fill="#555"/></svg><span>执行</span></div></div>
<div class="brow" style="top:391px"><div class="cbb" style="left:9px;top:11px"></div><div class="btxt" style="left:48px">界面交互-界面功能</div><div class="btxt" style="left:248px"></div><div class="ebb" style="left:848px;top:5px"><svg width="7" height="8" viewBox="0 0 7 8" style="position:absolute;left:11px;top:7.3px"><path d="M0.3 0.2 L6.3 3.6 L0.3 7Z" fill="#555"/></svg><span>执行</span></div></div>
<div class="brow odd" style="top:425px"><div class="cbb" style="left:9px;top:11px"></div><div class="btxt" style="left:48px">界面交互-界面功能</div><div class="btxt" style="left:248px"></div><div class="ebb" style="left:848px;top:5px"><svg width="7" height="8" viewBox="0 0 7 8" style="position:absolute;left:11px;top:7.3px"><path d="M0.3 0.2 L6.3 3.6 L0.3 7Z" fill="#555"/></svg><span>执行</span></div></div>
<div class="brow" style="top:459px"><div class="cbb" style="left:9px;top:11px"></div><div class="btxt" style="left:48px">界面交互-界面功能</div><div class="btxt" style="left:248px"></div><div class="ebb" style="left:848px;top:5px"><svg width="7" height="8" viewBox="0 0 7 8" style="position:absolute;left:11px;top:7.3px"><path d="M0.3 0.2 L6.3 3.6 L0.3 7Z" fill="#555"/></svg><span>执行</span></div></div>
<div class="brow odd" style="top:493px"><div class="cbb" style="left:9px;top:11px"></div><div class="btxt" style="left:48px">界面交互-界面功能</div><div class="btxt" style="left:248px"></div><div class="ebb" style="left:848px;top:5px"><svg width="7" height="8" viewBox="0 0 7 8" style="position:absolute;left:11px;top:7.3px"><path d="M0.3 0.2 L6.3 3.6 L0.3 7Z" fill="#555"/></svg><span>执行</span></div></div>
<div class="brow" style="top:527px"><div class="cbb" style="left:9px;top:11px"></div><div class="btxt" style="left:48px">界面交互-界面功能</div><div class="btxt" style="left:248px"></div><div class="ebb" style="left:848px;top:5px"><svg width="7" height="8" viewBox="0 0 7 8" style="position:absolute;left:11px;top:7.3px"><path d="M0.3 0.2 L6.3 3.6 L0.3 7Z" fill="#555"/></svg><span>执行</span></div></div>
<div class="brow odd" style="top:561px"><div class="cbb" style="left:9px;top:11px"></div><div class="btxt" style="left:48px">界面交互-界面功能</div><div class="btxt" style="left:248px"></div><div class="ebb" style="left:848px;top:5px"><svg width="7" height="8" viewBox="0 0 7 8" style="position:absolute;left:11px;top:7.3px"><path d="M0.3 0.2 L6.3 3.6 L0.3 7Z" fill="#555"/></svg><span>执行</span></div></div>
<div class="brow" style="top:595px"><div class="cbb" style="left:9px;top:11px"></div><div class="btxt" style="left:48px">界面交互-界面功能</div><div class="btxt" style="left:248px"></div><div class="ebb" style="left:848px;top:5px"><svg width="7" height="8" viewBox="0 0 7 8" style="position:absolute;left:11px;top:7.3px"><path d="M0.3 0.2 L6.3 3.6 L0.3 7Z" fill="#555"/></svg><span>执行</span></div></div>
<div class="brow odd" style="top:629px"><div class="cbb" style="left:9px;top:11px"></div><div class="btxt" style="left:48px">界面交互-界面功能</div><div class="btxt" style="left:248px"></div><div class="ebb" style="left:848px;top:5px"><svg width="7" height="8" viewBox="0 0 7 8" style="position:absolute;left:11px;top:7.3px"><path d="M0.3 0.2 L6.3 3.6 L0.3 7Z" fill="#555"/></svg><span>执行</span></div></div>
<div class="brow" style="top:663px"><div class="cbb" style="left:9px;top:11px"></div><div class="btxt" style="left:48px">界面交互-界面功能</div><div class="btxt" style="left:248px"></div><div class="ebb" style="left:848px;top:5px"><svg width="7" height="8" viewBox="0 0 7 8" style="position:absolute;left:11px;top:7.3px"><path d="M0.3 0.2 L6.3 3.6 L0.3 7Z" fill="#555"/></svg><span>执行</span></div></div>
<div class="brow odd" style="top:697px"><div class="cbb" style="left:9px;top:11px"></div><div class="btxt" style="left:48px">界面交互-输入输出</div><div class="btxt" style="left:248px">打开表单设计器表单</div><div class="ebb" style="left:848px;top:5px"><svg width="7" height="8" viewBox="0 0 7 8" style="position:absolute;left:11px;top:7.3px"><path d="M0.3 0.2 L6.3 3.6 L0.3 7Z" fill="#555"/></svg><span>执行</span></div></div>
<div class="brow" style="top:731px"><div class="cbb" style="left:9px;top:11px"></div><div class="btxt" style="left:48px">界面交互-界面功能</div><div class="btxt" style="left:248px">打开链接-应用内打开</div><div class="ebb" style="left:848px;top:5px"><svg width="7" height="8" viewBox="0 0 7 8" style="position:absolute;left:11px;top:7.3px"><path d="M0.3 0.2 L6.3 3.6 L0.3 7Z" fill="#555"/></svg><span>执行</span></div></div>
<div class="brow odd" style="top:765px"><div class="cbb" style="left:9px;top:11px"></div><div class="btxt" style="left:48px">界面交互-界面功能</div><div class="btxt" style="left:248px">打开链接-新窗口打开-相对路径</div><div class="ebb" style="left:848px;top:5px"><svg width="7" height="8" viewBox="0 0 7 8" style="position:absolute;left:11px;top:7.3px"><path d="M0.3 0.2 L6.3 3.6 L0.3 7Z" fill="#555"/></svg><span>执行</span></div></div>
<div class="brow" style="top:799px"><div class="cbb" style="left:9px;top:11px"></div><div class="btxt" style="left:48px">界面交互-界面功能</div><div class="btxt" style="left:248px">打开链接-新窗口打开-全路径</div><div class="ebb" style="left:848px;top:5px"><svg width="7" height="8" viewBox="0 0 7 8" style="position:absolute;left:11px;top:7.3px"><path d="M0.3 0.2 L6.3 3.6 L0.3 7Z" fill="#555"/></svg><span>执行</span></div></div>
<div class="brow odd" style="top:833px"><div class="cbb" style="left:9px;top:11px"></div><div class="btxt" style="left:48px">界面交互-界面功能</div><div class="btxt" style="left:248px">打开链接-在当前页面打开-相对路径</div><div class="ebb" style="left:848px;top:5px"><svg width="7" height="8" viewBox="0 0 7 8" style="position:absolute;left:11px;top:7.3px"><path d="M0.3 0.2 L6.3 3.6 L0.3 7Z" fill="#555"/></svg><span>执行</span></div></div>
<div class="brow" style="top:867px"><div class="cbb" style="left:9px;top:11px"></div><div class="btxt" style="left:48px">界面交互-界面功能</div><div class="btxt" style="left:248px">打开链接-在当前页面打开-全路径</div><div class="ebb" style="left:848px;top:5px"><svg width="7" height="8" viewBox="0 0 7 8" style="position:absolute;left:11px;top:7.3px"><path d="M0.3 0.2 L6.3 3.6 L0.3 7Z" fill="#555"/></svg><span>执行</span></div></div>
<div class="brow odd" style="top:901px"><div class="cbb" style="left:9px;top:11px"></div><div class="btxt" style="left:48px">界面交互-界面功能</div><div class="btxt" style="left:248px">打开链接-在弹窗打开-相对路径</div><div class="ebb" style="left:848px;top:5px"><svg width="7" height="8" viewBox="0 0 7 8" style="position:absolute;left:11px;top:7.3px"><path d="M0.3 0.2 L6.3 3.6 L0.3 7Z" fill="#555"/></svg><span>执行</span></div></div>
<div class="brow" style="top:935px"><div class="cbb" style="left:9px;top:11px"></div><div class="btxt" style="left:48px">界面交互-界面功能</div><div class="btxt" style="left:248px">打开链接-在弹窗打开-全路径</div><div class="ebb" style="left:848px;top:5px"><svg width="7" height="8" viewBox="0 0 7 8" style="position:absolute;left:11px;top:7.3px"><path d="M0.3 0.2 L6.3 3.6 L0.3 7Z" fill="#555"/></svg><span>执行</span></div></div>
<div class="brow odd" style="top:969px"><div class="cbb" style="left:9px;top:11px"></div><div class="btxt" style="left:48px">界面交互-界面功能</div><div class="btxt" style="left:248px">打开链接-在弹窗打开-交互式</div><div class="ebb" style="left:848px;top:5px"><svg width="7" height="8" viewBox="0 0 7 8" style="position:absolute;left:11px;top:7.3px"><path d="M0.3 0.2 L6.3 3.6 L0.3 7Z" fill="#555"/></svg><span>执行</span></div></div>
<div class="brow" style="top:1003px"><div class="cbb" style="left:9px;top:11px"></div><div class="btxt" style="left:48px">界面交互-界面功能</div><div class="btxt" style="left:248px">打开侧边栏或对话框-侧边栏</div><div class="ebb" style="left:848px;top:5px"><svg width="7" height="8" viewBox="0 0 7 8" style="position:absolute;left:11px;top:7.3px"><path d="M0.3 0.2 L6.3 3.6 L0.3 7Z" fill="#555"/></svg><span>执行</span></div></div>
<div class="brow sel2" style="top:1037px"><div class="cbb" style="left:9px;top:11px"></div><div class="btxt" style="left:48px">界面交互-界面功能</div><div class="btxt" style="left:248px">打开侧边栏或对话框-对话框</div><div class="ebb" style="left:848px;top:5px"><svg width="7" height="8" viewBox="0 0 7 8" style="position:absolute;left:11px;top:7.3px"><path d="M0.3 0.2 L6.3 3.6 L0.3 7Z" fill="#555"/></svg><span>执行</span></div></div>
  </div>
  <div class="bhead">
   <div class="cbb" style="left:9px;top:11px"></div>
   <div class="btxt" style="left:50px;top:9px;color:#aaa;font-size:12px">T</div>
   <svg class="ic" style="left:814.5px;top:15px" width="7" height="5" viewBox="0 0 7 5"><path d="M0 0.5 H7 L3.5 4.5Z" fill="#aaa"/></svg>
   <div class="btxt" style="left:851px;top:10px;font-size:12px;line-height:14px">操作</div>
  </div>
  <div class="vl" style="left:37px;height:1143px;z-index:3"></div>
  <div class="vl" style="left:237px;height:1143px;z-index:3"></div>
  <div class="vl" style="left:537px;height:1143px;z-index:3"></div>
  <div class="vl" style="left:837px;height:1143px;z-index:3"></div>
  <div class="vl" style="left:1045px;height:1143px;z-index:3"></div>
  <div class="abs" style="left:1046px;top:35px;width:9px;height:1108px;background:#fafafa;z-index:3"></div>
  <div class="abs" style="left:1046.5px;top:735px;width:7px;height:370px;border-radius:3px;background:#c6c6c6;z-index:4"></div>
 </div>
</div>
<div id="mask"></div>
<div id="dlg">
 <div class="abs" style="left:20px;top:24px;width:30px;height:10px;border-radius:5px;background:#c7f5c7"></div>
 <div class="abs" style="left:20px;top:13px;font-size:15px;line-height:18px;color:#444">对话框</div>
 <svg class="ic" style="left:662px;top:16px" width="12" height="12" viewBox="0 0 12 12"><path d="M1.2 1.2 L10.8 10.8 M10.8 1.2 L1.2 10.8" stroke="#555" stroke-width="1.15"/></svg>
 <div class="abs" style="left:0;top:43px;width:700px;height:1px;background:#e6e6ea"></div>
 <div class="btn" style="left:499px;top:52px;width:57px;height:24px"><svg width="11" height="11" viewBox="0 0 11 11" style="position:absolute;left:9px;top:5.8px"><path d="M1.2 4.3 A4.3 4.3 0 0 1 9.4 3.6" fill="none" stroke="#555" stroke-width="1.1"/><path d="M9.8 6.7 A4.3 4.3 0 0 1 1.6 7.4" fill="none" stroke="#555" stroke-width="1.1"/><path d="M0.4 3 L1.3 5.2 L3 3.9" fill="none" stroke="#555" stroke-width="1"/><path d="M10.6 8 L9.7 5.8 L8 7.1" fill="none" stroke="#555" stroke-width="1"/></svg><span style="position:absolute;left:23.5px;top:4.5px;line-height:14px;font-size:12px">刷新</span></div>
 <svg class="ic" style="left:574px;top:59px" width="10" height="9" viewBox="0 0 10 9"><path d="M9 4.5 H1.5 M4.5 1 L1 4.5 L4.5 8" stroke="#ccc" stroke-width="1" fill="none"/></svg>
 <div class="pg" style="left:595px;top:57px">1 ~ 91 / 91</div>
 <svg class="ic" style="left:664px;top:59px" width="10" height="9" viewBox="0 0 10 9"><path d="M1 4.5 H8.5 M5.5 1 L9 4.5 L5.5 8" stroke="#ccc" stroke-width="1" fill="none"/></svg>
 <div class="abs" style="left:0;top:83px;width:700px;height:1px;background:#e6e6ea"></div>
 <div class="abs" style="left:0;top:84px;width:700px;height:660px;background:#f5f5f6"></div>
 <div id="dtab" class="abs" style="left:3px;top:87px;width:690px;height:657px;border:1px solid #e6e7ee;background:#fff;overflow:hidden">
  <div class="abs" style="left:0;top:35px;width:680px;height:572px;overflow:hidden">
<div class="drow" style="top:0px"><div class="cb" style="left:10px;top:11px"></div><div class="dtxt" style="left:49px">数据表</div><div class="dtxt" style="left:249px">查询记录列表</div><div class="dtxt" style="left:549px">查询数</div></div>
<div class="drow odd" style="top:34px"><div class="cb" style="left:10px;top:11px"></div><div class="dtxt" style="left:49px">数据表</div><div class="dtxt" style="left:249px">查询记录数量</div><div class="dtxt" style="left:549px"></div></div>
<div class="drow" style="top:68px"><div class="cb" style="left:10px;top:11px"></div><div class="dtxt" style="left:49px">数据表</div><div class="dtxt" style="left:249px">查询记录</div><div class="dtxt" style="left:549px"></div></div>
<div class="drow odd" style="top:102px"><div class="cb" style="left:10px;top:11px"></div><div class="dtxt" style="left:49px">数据表</div><div class="dtxt" style="left:249px">查询关联列表记录列表</div><div class="dtxt" style="left:549px"></div></div>
<div class="drow" style="top:136px"><div class="cb" style="left:10px;top:11px"></div><div class="dtxt" style="left:49px">数据表</div><div class="dtxt" style="left:249px">查询关联列表记录列表数量</div><div class="dtxt" style="left:549px"></div></div>
<div class="drow odd" style="top:170px"><div class="cb" style="left:10px;top:11px"></div><div class="dtxt" style="left:49px">数据表</div><div class="dtxt" style="left:249px">创建记录</div><div class="dtxt" style="left:549px"></div></div>
<div class="drow" style="top:204px"><div class="cb" style="left:10px;top:11px"></div><div class="dtxt" style="left:49px">数据表</div><div class="dtxt" style="left:249px">更新记录</div><div class="dtxt" style="left:549px"></div></div>
<div class="drow odd" style="top:238px"><div class="cb" style="left:10px;top:11px"></div><div class="dtxt" style="left:49px">数据表</div><div class="dtxt" style="left:249px">删除记录</div><div class="dtxt" style="left:549px"></div></div>
<div class="drow" style="top:272px"><div class="cb" style="left:10px;top:11px"></div><div class="dtxt" style="left:49px">数据表</div><div class="dtxt" style="left:249px">更新查找汇总字段值</div><div class="dtxt" style="left:549px"></div></div>
<div class="drow odd" style="top:306px"><div class="cb" style="left:10px;top:11px"></div><div class="dtxt" style="left:49px">控制与变量</div><div class="dtxt" style="left:249px">循环列表</div><div class="dtxt" style="left:549px"></div></div>
<div class="drow" style="top:340px"><div class="cb" style="left:10px;top:11px"></div><div class="dtxt" style="left:49px">控制与变量</div><div class="dtxt" style="left:249px">循环列表-数据表记录</div><div class="dtxt" style="left:549px"></div></div>
<div class="drow odd" style="top:374px"><div class="cb" style="left:10px;top:11px"></div><div class="dtxt" style="left:49px">控制与变量</div><div class="dtxt" style="left:249px">条件循环</div><div class="dtxt" style="left:549px"></div></div>
<div class="drow" style="top:408px"><div class="cb" style="left:10px;top:11px"></div><div class="dtxt" style="left:49px">控制与变量</div><div class="dtxt" style="left:249px">条件判断</div><div class="dtxt" style="left:549px"></div></div>
<div class="drow odd" style="top:442px"><div class="cb" style="left:10px;top:11px"></div><div class="dtxt" style="left:49px">控制与变量</div><div class="dtxt" style="left:249px">条件判断-数据表记录</div><div class="dtxt" style="left:549px"></div></div>
<div class="drow" style="top:476px"><div class="cb" style="left:10px;top:11px"></div><div class="dtxt" style="left:49px">控制与变量</div><div class="dtxt" style="left:249px">设置变量</div><div class="dtxt" style="left:549px"></div></div>
<div class="drow odd" style="top:510px"><div class="cb" style="left:10px;top:11px"></div><div class="dtxt" style="left:49px">控制与变量</div><div class="dtxt" style="left:249px">设置变量-作用域</div><div class="dtxt" style="left:549px"></div></div>
<div class="drow" style="top:544px"><div class="cb" style="left:10px;top:11px"></div><div class="dtxt" style="left:49px">控制与变量</div><div class="dtxt" style="left:249px">更新变量</div><div class="dtxt" style="left:549px"></div></div>
  </div>
  <div class="abs" style="left:0;top:0;width:689px;height:35px;background:#f7f7f8;border-bottom:1px solid #e6e7ee">
   <div class="cbh" style="left:10px;top:11px"></div>
   <div class="dtxt" style="left:51px;top:10.5px;color:#aaa;font-size:12px;line-height:14px">T</div>
   <div class="dtxt" style="left:64.5px;top:10.5px;font-size:12px;line-height:14px;color:#444">分组</div>
   <svg class="ic" style="left:215px;top:15px" width="7" height="5" viewBox="0 0 7 5"><path d="M0 0.5 H7 L3.5 4.5Z" fill="#999"/></svg>
   <div class="dtxt" style="left:251px;top:10.5px;color:#aaa;font-size:12px;line-height:14px">T</div>
   <div class="dtxt" style="left:264.5px;top:10.5px;font-size:12px;line-height:14px;color:#444">名称</div>
   <svg class="ic" style="left:515px;top:15px" width="7" height="5" viewBox="0 0 7 5"><path d="M0 0.5 H7 L3.5 4.5Z" fill="#999"/></svg>
   <div class="dtxt" style="left:551px;top:10.5px;color:#aaa;font-size:12px;line-height:14px">T</div>
   <div class="dtxt" style="left:564.5px;top:10.5px;font-size:12px;line-height:14px;color:#444">备注</div>
  </div>
  <div class="abs" style="left:0;top:607px;width:689px;height:37px;background:#f7f7f8;border-top:1px solid #e6e7ee;border-bottom:1px solid #e6e7ee"></div>
  <div class="vl" style="left:38px;height:643px"></div>
  <div class="vl" style="left:238px;height:643px"></div>
  <div class="vl" style="left:538px;height:643px"></div>
  <!-- fixed op column -->
  <div class="abs" style="left:580.5px;top:0;width:100px;height:643px;background:#fff;box-shadow:-6px 0 8px -4px rgba(0,0,0,0.12)">
   <div class="abs" style="left:0;top:0;width:100px;height:35px;background:#f7f7f8;border-bottom:1px solid #e6e7ee"></div>
   <div class="dtxt" style="left:13.5px;top:10.5px;font-size:12px;line-height:14px;color:#444">操作</div>
   <div class="abs" style="left:0;top:35px;width:100px;height:572px;overflow:hidden">
<div class="drow" style="top:0px;width:100px"><div class="eb" style="left:10.5px;top:5px"><svg width="7" height="8" viewBox="0 0 7 8" style="position:absolute;left:11px;top:7.3px"><path d="M0.3 0.2 L6.3 3.6 L0.3 7Z" fill="#555"/></svg><span>执行</span></div></div>
<div class="drow odd" style="top:34px;width:100px"><div class="eb" style="left:10.5px;top:5px"><svg width="7" height="8" viewBox="0 0 7 8" style="position:absolute;left:11px;top:7.3px"><path d="M0.3 0.2 L6.3 3.6 L0.3 7Z" fill="#555"/></svg><span>执行</span></div></div>
<div class="drow" style="top:68px;width:100px"><div class="eb" style="left:10.5px;top:5px"><svg width="7" height="8" viewBox="0 0 7 8" style="position:absolute;left:11px;top:7.3px"><path d="M0.3 0.2 L6.3 3.6 L0.3 7Z" fill="#555"/></svg><span>执行</span></div></div>
<div class="drow odd" style="top:102px;width:100px"><div class="eb" style="left:10.5px;top:5px"><svg width="7" height="8" viewBox="0 0 7 8" style="position:absolute;left:11px;top:7.3px"><path d="M0.3 0.2 L6.3 3.6 L0.3 7Z" fill="#555"/></svg><span>执行</span></div></div>
<div class="drow" style="top:136px;width:100px"><div class="eb" style="left:10.5px;top:5px"><svg width="7" height="8" viewBox="0 0 7 8" style="position:absolute;left:11px;top:7.3px"><path d="M0.3 0.2 L6.3 3.6 L0.3 7Z" fill="#555"/></svg><span>执行</span></div></div>
<div class="drow odd" style="top:170px;width:100px"><div class="eb" style="left:10.5px;top:5px"><svg width="7" height="8" viewBox="0 0 7 8" style="position:absolute;left:11px;top:7.3px"><path d="M0.3 0.2 L6.3 3.6 L0.3 7Z" fill="#555"/></svg><span>执行</span></div></div>
<div class="drow" style="top:204px;width:100px"><div class="eb" style="left:10.5px;top:5px"><svg width="7" height="8" viewBox="0 0 7 8" style="position:absolute;left:11px;top:7.3px"><path d="M0.3 0.2 L6.3 3.6 L0.3 7Z" fill="#555"/></svg><span>执行</span></div></div>
<div class="drow odd" style="top:238px;width:100px"><div class="eb" style="left:10.5px;top:5px"><svg width="7" height="8" viewBox="0 0 7 8" style="position:absolute;left:11px;top:7.3px"><path d="M0.3 0.2 L6.3 3.6 L0.3 7Z" fill="#555"/></svg><span>执行</span></div></div>
<div class="drow" style="top:272px;width:100px"><div class="eb" style="left:10.5px;top:5px"><svg width="7" height="8" viewBox="0 0 7 8" style="position:absolute;left:11px;top:7.3px"><path d="M0.3 0.2 L6.3 3.6 L0.3 7Z" fill="#555"/></svg><span>执行</span></div></div>
<div class="drow odd" style="top:306px;width:100px"><div class="eb" style="left:10.5px;top:5px"><svg width="7" height="8" viewBox="0 0 7 8" style="position:absolute;left:11px;top:7.3px"><path d="M0.3 0.2 L6.3 3.6 L0.3 7Z" fill="#555"/></svg><span>执行</span></div></div>
<div class="drow" style="top:340px;width:100px"><div class="eb" style="left:10.5px;top:5px"><svg width="7" height="8" viewBox="0 0 7 8" style="position:absolute;left:11px;top:7.3px"><path d="M0.3 0.2 L6.3 3.6 L0.3 7Z" fill="#555"/></svg><span>执行</span></div></div>
<div class="drow odd" style="top:374px;width:100px"><div class="eb" style="left:10.5px;top:5px"><svg width="7" height="8" viewBox="0 0 7 8" style="position:absolute;left:11px;top:7.3px"><path d="M0.3 0.2 L6.3 3.6 L0.3 7Z" fill="#555"/></svg><span>执行</span></div></div>
<div class="drow" style="top:408px;width:100px"><div class="eb" style="left:10.5px;top:5px"><svg width="7" height="8" viewBox="0 0 7 8" style="position:absolute;left:11px;top:7.3px"><path d="M0.3 0.2 L6.3 3.6 L0.3 7Z" fill="#555"/></svg><span>执行</span></div></div>
<div class="drow odd" style="top:442px;width:100px"><div class="eb" style="left:10.5px;top:5px"><svg width="7" height="8" viewBox="0 0 7 8" style="position:absolute;left:11px;top:7.3px"><path d="M0.3 0.2 L6.3 3.6 L0.3 7Z" fill="#555"/></svg><span>执行</span></div></div>
<div class="drow" style="top:476px;width:100px"><div class="eb" style="left:10.5px;top:5px"><svg width="7" height="8" viewBox="0 0 7 8" style="position:absolute;left:11px;top:7.3px"><path d="M0.3 0.2 L6.3 3.6 L0.3 7Z" fill="#555"/></svg><span>执行</span></div></div>
<div class="drow odd" style="top:510px;width:100px"><div class="eb" style="left:10.5px;top:5px"><svg width="7" height="8" viewBox="0 0 7 8" style="position:absolute;left:11px;top:7.3px"><path d="M0.3 0.2 L6.3 3.6 L0.3 7Z" fill="#555"/></svg><span>执行</span></div></div>
<div class="drow" style="top:544px;width:100px"><div class="eb" style="left:10.5px;top:5px"><svg width="7" height="8" viewBox="0 0 7 8" style="position:absolute;left:11px;top:7.3px"><path d="M0.3 0.2 L6.3 3.6 L0.3 7Z" fill="#555"/></svg><span>执行</span></div></div>
   </div>
   <div class="abs" style="left:0;top:607px;width:100px;height:37px;background:#f7f7f8;border-top:1px solid #e6e7ee;border-bottom:1px solid #e6e7ee"></div>
  </div>
  <div class="vl" style="left:680px;height:643px"></div>
  <div class="abs" style="left:681px;top:35px;width:8px;height:608px;background:#fff"></div>
  <div class="abs" style="left:681px;top:35px;width:7px;height:106px;border-radius:3.5px;background:#b3b3b3"></div>
  <div class="abs" style="left:0;top:644px;width:689px;height:12px;background:#fff"></div>
  <div class="abs" style="left:1px;top:644px;width:500px;height:11px;border-radius:5.5px;background:#cfcfcf"></div>
 </div>
</div>
</body></html>
